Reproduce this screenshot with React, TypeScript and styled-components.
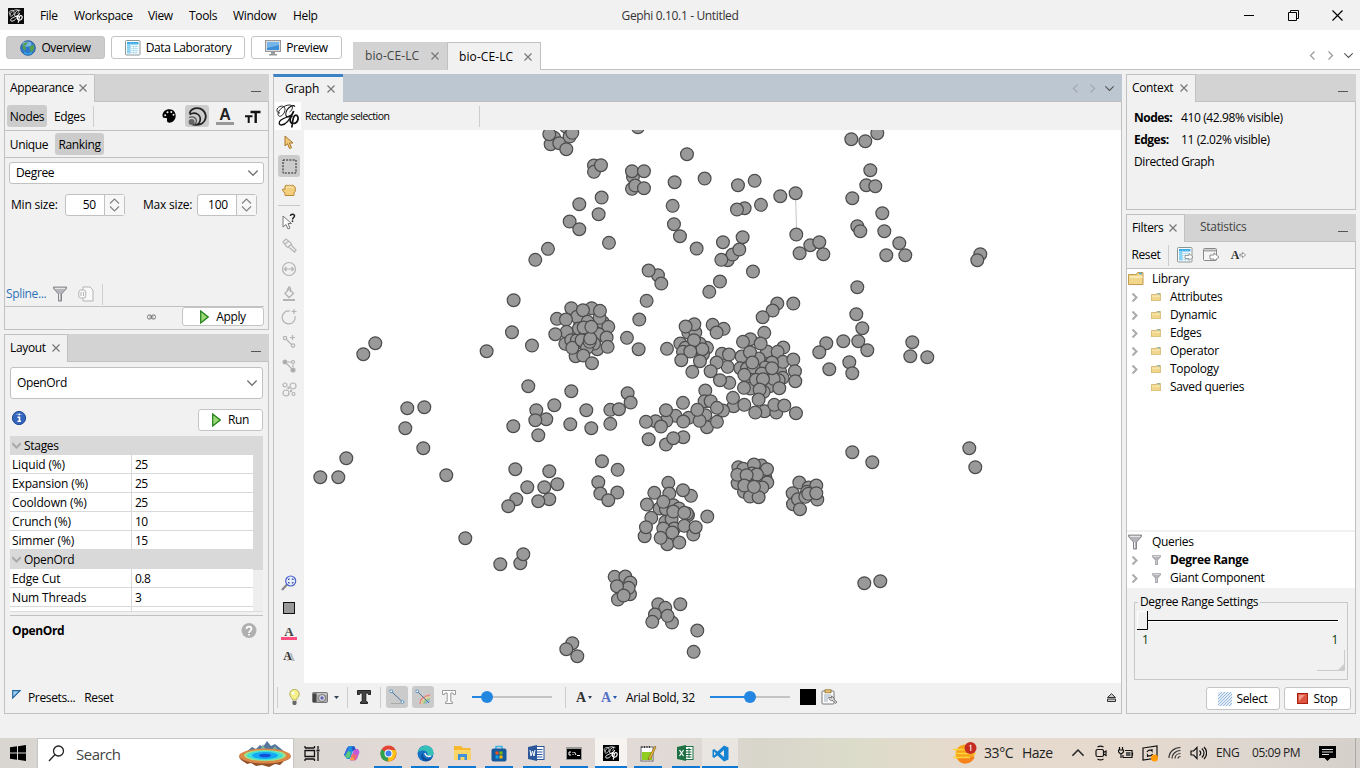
import React from "react";
import styled, { createGlobalStyle, css } from "styled-components";

const line = "#c1c1c1";

const Global = createGlobalStyle`
  *, *::before, *::after { box-sizing: border-box; }
  body { margin: 0; background: #f1f1f1; }
  svg { display: block; flex: none; }
`;

const Screen = styled.div`
  width: 1360px;
  height: 768px;
  overflow: hidden;
  display: flex;
  flex-direction: column;
  background: #f1f1f1;
  color: #000;
  font: 12px/16px "Open Sans", "Noto Sans", sans-serif;
  letter-spacing: -0.35px;
  white-space: nowrap;
`;

/* ---------- title bar ---------- */
const TitleBar = styled.header`
  height: 30px;
  flex: none;
  display: grid;
  grid-template-columns: 620px 1fr 620px;
  align-items: center;
`;
const MenuBar = styled.nav`
  display: flex;
  align-items: center;
  padding: 1px 0 0 8px;
`;
const MenuItem = styled.span<{ $w: number }>`
  width: ${(p) => p.$w}px;
`;
const Title = styled.div`
  text-align: center;
  color: #333;
  padding-top: 1px;
  letter-spacing: -0.35px;
`;
const WindowButtons = styled.div`
  display: flex;
  justify-content: flex-end;
  gap: 33px;
  padding-right: 17px;
`;

/* ---------- perspective bar ---------- */
const PerspectiveBar = styled.div`
  height: 40px;
  flex: none;
  display: flex;
  background: #fff;
  border-bottom: 1px solid ${line};
  padding: 6px 7px 0 6px;
`;
const Button = styled.button<{ $w: number; $h?: number; $on?: boolean; $gap?: number }>`
  width: ${(p) => p.$w}px;
  height: ${(p) => p.$h ?? 23}px;
  flex: none;
  display: flex;
  align-items: center;
  justify-content: center;
  gap: ${(p) => p.$gap ?? 5}px;
  padding: 0;
  border: 1px solid #c4c4c4;
  border-radius: 3px;
  background: ${(p) => (p.$on ? "#cccccc" : "#fff")};
  color: #000;
  font: inherit;
  letter-spacing: inherit;
`;
const ButtonRow = styled.div`
  display: flex;
  gap: 6px;
  width: 347px;
`;
const WorkspaceTab = styled.div<{ $active?: boolean }>`
  display: flex;
  align-items: center;
  justify-content: space-between;
  margin-top: 6px;
  height: 28px;
  width: ${(p) => (p.$active ? 94 : 94)}px;
  padding: 0 ${(p) => (p.$active ? "8px 0 11px" : "8px 0 12px")};
  color: ${(p) => (p.$active ? "#000" : "#444")};
  background: ${(p) => (p.$active ? "#f1f1f1" : "#d3d3d3")};
  border: ${(p) => (p.$active ? `1px solid ${line}` : "0")};
  border-bottom: 0;
  letter-spacing: 0.1px;
`;
const TabArrows = styled.div`
  display: flex;
  align-items: center;
  gap: 9px;
  margin-left: auto;
  padding: 6px 0 0;
`;

/* ---------- docked panels ---------- */
const Workbench = styled.main`
  height: 640px;
  margin: 4px 4px 24px;
  flex: none;
  display: grid;
  grid-template-columns: 265px 849px 230px;
  column-gap: 4px;
`;
const Column = styled.div`
  display: flex;
  flex-direction: column;
  gap: 4px;
`;
const Panel = styled.section<{ $h: number }>`
  height: ${(p) => p.$h}px;
  display: flex;
  flex-direction: column;
  border: 1px solid ${line};
  border-top: 0;
`;
const PanelHead = styled.div<{ $focus?: boolean }>`
  height: 28px;
  flex: none;
  display: flex;
  align-items: stretch;
  margin: 0 -1px;
  background: ${(p) => (p.$focus ? "#bdc7d1" : "#d3d3d3")};
  box-shadow: inset 0 -1px ${line};
`;
const PanelTab = styled.div<{ $w: number; $focus?: boolean }>`
  width: ${(p) => p.$w}px;
  display: flex;
  align-items: center;
  justify-content: space-between;
  padding: 0 7px 1px 5px;
  background: #f1f1f1;
  border: 1px solid ${line};
  border-bottom: 0;
  ${(p) =>
    p.$focus &&
    css`
      border-top: 3px solid #3c83c5;
      border-right: 0;
      padding: 0 8px 2px 11px;
      letter-spacing: -0.15px;
    `}
`;
const IdleTab = styled.span`
  padding: 5px 0 0 15px;
  color: #444;
  letter-spacing: -0.3px;
`;
const Minimise = styled.span`
  width: 10px;
  height: 1px;
  background: #555;
  margin: 17px 8px 0 auto;
`;
const Bar = styled.div<{ $h: number; $rule?: boolean }>`
  height: ${(p) => p.$h}px;
  flex: none;
  display: flex;
  align-items: center;
  padding-left: 2px;
  border-bottom: ${(p) => (p.$rule ? `1px solid ${line}` : "0")};
`;
const Toggle = styled.span<{ $on?: boolean; $w: number; $drop?: number }>`
  width: ${(p) => p.$w}px;
  height: 22px;
  flex: none;
  display: flex;
  align-items: center;
  justify-content: center;
  border-radius: 3px;
  padding-top: ${(p) => p.$drop ?? 0}px;
  background: ${(p) => (p.$on ? "#cccccc" : "transparent")};
`;
const Separator = styled.i<{ $h?: number; $m?: string }>`
  width: 1px;
  height: ${(p) => p.$h ?? 21}px;
  flex: none;
  background: #cdcdcd;
  margin: ${(p) => p.$m ?? "0"};
`;
const IconGroup = styled.div`
  display: flex;
  margin-left: auto;
  gap: 4px;
  margin-right: 3px;
`;
const Combo = styled.div<{ $h: number; $m: string }>`
  height: ${(p) => p.$h}px;
  flex: none;
  margin: ${(p) => p.$m};
  padding: 0 5px 0 6px;
  display: flex;
  align-items: center;
  justify-content: space-between;
  background: #fff;
  border: 1px solid ${line};
  border-radius: 3px;
`;
const SizeRow = styled.div`
  display: flex;
  align-items: center;
  padding: 10px 0 0 6px;
  letter-spacing: -0.2px;
`;
const SizeLabel = styled.label<{ $w: number }>`
  width: ${(p) => p.$w}px;
  flex: none;
`;
const Spinner = styled.div`
  width: 60px;
  height: 22px;
  flex: none;
  display: flex;
  background: #fff;
  border: 1px solid ${line};
  border-radius: 3px;
  margin-right: 18px;
`;
const SpinnerValue = styled.span`
  width: 39px;
  padding: 2px 8px 0 0;
  text-align: right;
  border-right: 1px solid ${line};
`;
const SpinnerArrows = styled.span`
  flex: 1;
  display: grid;
  place-items: center;
  align-content: center;
  background: #f7f7f7;
`;
const SplineRow = styled.div`
  display: flex;
  align-items: center;
  height: 24px;
  margin-top: auto;
  padding-left: 1px;
`;
const SplineLink = styled.a`
  width: 47px;
  color: #2f72b8;
`;
const ApplyRow = styled.div`
  height: 23px;
  display: flex;
  align-items: flex-start;
  justify-content: flex-end;
  margin-right: 4px;
  border-top: 1px solid ${line};
`;
const LinkIcon = styled.span`
  padding: 7px 26px 0 0;
`;
const RunRow = styled.div`
  height: 22px;
  margin: 10px 5px 5px 7px;
  display: flex;
  justify-content: space-between;
`;

/* ---------- layout property sheet ---------- */
const Sheet = styled.div`
  height: 176px;
  margin: 0 5px;
  display: flex;
  overflow: hidden;
  border-bottom: 1px solid #dcdcdc;
`;
const Rows = styled.div`
  width: 243px;
`;
const GroupRow = styled.div`
  height: 19px;
  display: flex;
  align-items: center;
  gap: 3px;
  padding-left: 2px;
  background: #d9d9d9;
  letter-spacing: -0.3px;
`;
const PropRow = styled.div`
  height: 19px;
  display: grid;
  grid-template-columns: 122px 1fr;
  background: #fff;
  border-bottom: 1px solid #d9d9d9;
`;
const PropCell = styled.span`
  padding: 2px 0 0 3px;
  border-right: 1px solid #d9d9d9;
  letter-spacing: -0.15px;
  &:first-child { padding-left: 2px; }
  &:last-child { border: 0; letter-spacing: -0.5px; }
`;
const ScrollTrack = styled.div`
  width: 10px;
  background: #eee;
  &::before { content: ""; display: block; height: 134px; background: #d9d9d9; }
`;
const HelpBox = styled.div`
  flex: 1;
  margin: 3px 5px 0;
  border-top: 1px solid ${line};
  padding: 7px 6px 0 2px;
  display: flex;
  justify-content: space-between;
  font-weight: 700;
`;
const PresetRow = styled.div`
  display: flex;
  height: 23px;
  align-items: flex-start;
  padding-left: 7px;
`;
const PresetText = styled.span<{ $m: number }>`
  margin-left: ${(p) => p.$m}px;
`;

/* ---------- graph ---------- */
const HeadArrows = styled.div`
  display: flex;
  align-items: center;
  gap: 8px;
  margin: 0 8px 0 auto;
`;
const GraphBar = styled.div`
  height: 28px;
  flex: none;
  display: flex;
  align-items: center;
  padding-left: 1px;
`;
const LogoBox = styled.span`
  width: 26px;
  height: 28px;
  background: #fff;
  margin-right: 4px;
`;
const ToolName = styled.span`
  width: 174px;
  font-size: 10.5px;
  letter-spacing: -0.5px;
`;
const GraphBody = styled.div`
  height: 553px;
  flex: none;
  display: flex;
`;
const ToolStrip = styled.div`
  width: 30px;
  display: flex;
  flex-direction: column;
  align-items: center;
`;
const Tool = styled.span<{ $on?: boolean; $top?: number }>`
  width: 22px;
  height: 22px;
  margin-top: ${(p) => p.$top ?? 2}px;
  display: grid;
  place-items: center;
  border-radius: 3px;
  background: ${(p) => (p.$on ? "#cbcbcb" : "transparent")};
`;
const StripRule = styled.i`
  width: 22px;
  height: 1px;
  background: #c8c8c8;
  margin-top: 4px;
`;
const Canvas = styled.svg`
  background: #fff;
`;
const GraphFooter = styled.div`
  flex: 1;
  display: flex;
  align-items: center;
  padding-bottom: 2px;
`;
const Slot = styled.span<{ $w: number; $on?: boolean; $m?: number }>`
  width: ${(p) => p.$w}px;
  height: 22px;
  flex: none;
  margin-right: ${(p) => p.$m ?? 0}px;
  display: flex;
  align-items: center;
  justify-content: center;
  border-radius: 3px;
  background: ${(p) => (p.$on ? "#cbcbcb" : "transparent")};
`;
const Slider = styled.span<{ $fill: number }>`
  width: 80px;
  height: 12px;
  flex: none;
  display: flex;
  align-items: center;
  background: linear-gradient(90deg, #2387e2 ${(p) => p.$fill}px, #c4c4c4 ${(p) => p.$fill}px) center / 100% 2px no-repeat;
  &::before {
    content: "";
    width: 12px;
    height: 12px;
    border-radius: 50%;
    background: #2387e2;
    margin-left: ${(p) => p.$fill - 6}px;
  }
`;
const FontName = styled.span`
  width: 84px;
  padding-top: 1px;
`;
const Swatch = styled.i`
  width: 16px;
  height: 16px;
  background: #000;
  margin-right: 5px;
`;

/* ---------- context and filters ---------- */
const ContextBody = styled.dl`
  margin: 5px 0 0 7px;
  line-height: 22px;
  display: grid;
  grid-template-columns: 47px 1fr;
  letter-spacing: -0.38px;
`;
const Term = styled.dt`
  font-weight: 700;
  letter-spacing: -0.5px;
`;
const Value = styled.dd<{ $wide?: boolean }>`
  margin: 0;
  ${(p) => p.$wide && "grid-column: 1 / 3;"}
`;
const Tree = styled.div<{ $h: number; $gap?: number }>`
  height: ${(p) => p.$h}px;
  flex: none;
  background: #fff;
  margin-bottom: ${(p) => p.$gap ?? 0}px;
  padding-top: 1px;
  letter-spacing: -0.32px;
`;
const TreeRow = styled.div<{ $bold?: boolean }>`
  height: 18px;
  display: grid;
  grid-template-columns: 15px 28px 1fr;
  align-items: center;
  font-weight: ${(p) => (p.$bold ? 700 : 400)};
`;
const TreeRoot = styled.div`
  height: 18px;
  padding-left: 1px;
  display: grid;
  grid-template-columns: 24px 1fr;
  align-items: center;
`;
const Center = styled.span`
  display: grid;
  place-items: center;
`;
const Settings = styled.fieldset`
  height: 85px;
  margin: 7px 7px 7px 7px;
  padding: 0 2px;
  border: 1px solid #c8c8c8;
  min-width: 0;
`;
const Legend = styled.legend`
  padding: 0 2px;
  margin-left: 1px;
  line-height: 14px;
  letter-spacing: -0.36px;
`;
const RangeLabels = styled.div`
  display: flex;
  justify-content: space-between;
  padding: 1px 7px 0 5px;
  color: #0b3d0b;
`;
const FilterActions = styled.div`
  display: flex;
  justify-content: flex-end;
  gap: 4px;
  padding-right: 4px;
`;

/* ---------- taskbar ---------- */
const Taskbar = styled.footer`
  height: 30px;
  flex: none;
  display: flex;
  align-items: stretch;
  background: linear-gradient(90deg, #d9d5d0 0, #dcd8d4 300px, #e5dad7 480px, #e0dad5 680px, #d8d5cb 760px, #dcdccb 850px, #e6dacd 960px, #e6dacf 1130px, #ddd6cf 1260px, #d5d0ca 1360px);
  color: #222;
`;
const Start = styled.div`
  width: 37px;
  flex: none;
  padding-right: 2px;
  display: grid;
  place-items: center;
`;
const Search = styled.div`
  width: 257px;
  flex: none;
  display: flex;
  align-items: center;
  background: #fff;
  border: 1px solid #c6c6c6;
  border-bottom-width: 0;
  padding: 0 1px 0 10px;
  font-size: 15px;
  letter-spacing: -0.5px;
  color: #444;
`;
const SearchText = styled.span`
  flex: 1;
  padding-left: 11px;
`;
const TaskItem = styled.div<{ $w: number; $line?: number; $bg?: string }>`
  width: ${(p) => p.$w}px;
  flex: none;
  display: flex;
  align-items: center;
  justify-content: center;
  background-color: ${(p) => p.$bg ?? "transparent"};
  background-image: ${(p) => (p.$line ? "linear-gradient(#0f78d4, #0f78d4)" : "none")};
  background-size: ${(p) => p.$line ?? 0}px 2px;
  background-position: center bottom;
  background-repeat: no-repeat;
`;
const Tray = styled.div`
  display: flex;
  align-items: center;
  margin-left: auto;
  border-right: 1px solid #aaa;
  margin-right: 4px;
`;
const TrayText = styled.span<{ $w: number; $size?: number; $ls?: number }>`
  width: ${(p) => p.$w}px;
  font-size: ${(p) => p.$size ?? 12}px;
  letter-spacing: ${(p) => p.$ls ?? -0.3}px;
`;

/* ---------- icons ---------- */
const Close = () => (
  <svg width="8" height="8" viewBox="0 0 8 8" stroke="#777" strokeWidth="1.2">
    <path d="M0.5 0.5 7.5 7.5M7.5 0.5 0.5 7.5" />
  </svg>
);
const Chevron = ({ dir, color = "#777", size = 9, w = 1.2 }: { dir: "l" | "r" | "d" | "u"; color?: string; size?: number; w?: number }) => {
  const d = { l: "M6.5 0.5 2.5 4.5 6.5 8.5", r: "M2.5 0.5 6.5 4.5 2.5 8.5", d: "M0.3 2.3 4.5 6.5 8.7 2.3", u: "M0.3 6.5 4.5 2.3 8.7 6.5" }[dir];
  return (
    <svg width={size} height={size} viewBox="0 0 9 9" fill="none" stroke={color} strokeWidth={w}>
      <path d={d} />
    </svg>
  );
};
const SpinArrows = () => (
  <svg width="11" height="14" viewBox="0 0 11 14" fill="none" stroke="#808080" strokeWidth="1.100">
    <path d="M1 5.500 5.500 1 10 5.500M1 8.500 5.500 13 10 8.500" />
  </svg>
);
const GephiMark = ({ size = 16, fg = "#fff", bg, h }: { size?: number; fg?: string; bg?: string; h?: number }) => (
  <svg width={size} height={h ?? size} viewBox="0 0 26 28" preserveAspectRatio="none" fill="none" stroke={fg} strokeWidth={bg ? 1.2 : 0.9}>
    {bg && <rect width="26" height="28" fill={bg} stroke="none" />}
    <path d="M5 11C1 11 .8 6 5 4.500 9 3 11 6 9.500 10 8 14 3.500 16 3 12.500 2.500 8 10 2.500 15 3c3.500.5 3 5-.5 7" />
    <path d="M20 4.500c-2-2-6 0-8 3.500-2 3.500-1.500 7 1 7 2.500-.2 5-3 6-6" strokeWidth={bg ? 1.5 : 1.1} />
    <path d="M18.500 9c-2.500 6-7 14-12 14-3 0-3-3-.5-5 3-2.500 8-3 11-5.500" strokeWidth={bg ? 1.5 : 1.3} />
    <path d="M17.500 13.500c-3 1.500-3.500 7.500.5 8 4.500.3 6.500-5.500 4-8-2.500-1.500-3.700 2-4.200 5l-1 7" strokeWidth={bg ? 2 : 1.7} />
  </svg>
);
const Globe = () => (
  <svg width="16" height="16" viewBox="0 0 16 16">
    <circle cx="8" cy="8" r="7.3" fill="#2f78cc" stroke="#2b5f9e" />
    <ellipse cx="7" cy="4" rx="4.5" ry="2.6" fill="#8cc6f0" opacity=".8" />
    <path d="M3 4.500c1-1.500 3-2.500 5-2.500L7 4.500 4.500 6l1.500 2-1 2.500C3 10 2 7 3 4.500zM9.500 6.500l4-2 1 3.500-2 3.500-2 .5-.5-3z" fill="#55a050" />
    <path d="M4 12.500c2 2 6 2 8 0" stroke="#2fb0e8" strokeWidth="1.200" fill="none" />
  </svg>
);
const TableIcon = ({ arrow }: { arrow?: boolean }) => (
  <svg width="16" height="16" viewBox="0 0 16 16">
    <rect x=".5" y=".5" width="14.5" height="14.5" rx="1" fill="#fff" stroke="#8a9694" />
    <rect x="2" y="2" width="11.5" height="2.5" fill="#3aabe6" />
    <rect x="2" y="4.5" width="3" height="9" fill="#7fd0f5" />
    <path d="M2 6.5h11.5M2 8.5h11.5M2 10.5h11.5M2 12.5h11.5M5.5 3v11M8.5 3v11M11 3v11" stroke="#a5d8ef" strokeWidth=".7" />
    {arrow && <path d="M8 8.5h4v-2l4 3.5-4 3.5v-2H8z" fill="#fff" stroke="#888" strokeWidth=".8" />}
  </svg>
);
const Monitor = () => (
  <svg width="16" height="16" viewBox="0 0 16 16">
    <rect x=".5" y=".5" width="15" height="11" fill="#ddd" stroke="#999" />
    <rect x="2" y="2" width="12" height="8" fill="#3e8fd8" />
    <path d="M2 2h12v3L2 8z" fill="#75b5ea" />
    <path d="M6 12h4v2h2v1.5H4V14h2z" fill="#999" />
  </svg>
);
const Palette = () => (
  <svg width="14" height="14" viewBox="0 0 14 14">
    <path d="M7.5.3C3.5.3.5 3 .5 6.500.5 9 2.500 9 4 9c1.500 0 1 1 1 2.500S6 13.700 7.500 13.700C11 13.700 13.700 10.500 13.700 6.800S11 .3 7.500.3z" fill="#000" />
    <g fill="#f1f1f1">
      <circle cx="3.200" cy="6.200" r="1" /><circle cx="5.500" cy="3.200" r="1" /><circle cx="9.300" cy="3" r="1" /><circle cx="11.500" cy="5.700" r="1" />
    </g>
  </svg>
);
const SizeIcon = () => (
  <svg width="19" height="19" viewBox="0 0 19 19" fill="none" stroke="#222">
    <path d="M1.500 6.500C2.500 3 6 1.200 9.500 1.200a8.300 8.300 0 0 1 2.500 16.200c-2 .6-5 .5-7.500.3" strokeWidth="1.800" />
    <path d="M1.500 7.500c6-3.500 12 .5 10.500 6.500-.4 1.500-1.200 2.700-2.500 3.500" strokeWidth="1.600" />
    <path d="M1 10.500c4-1.500 7.500 0 7.500 3.500 0 1.700-1 3-2.500 3.700" strokeWidth="1.300" stroke="#555" />
    <circle cx="3.600" cy="15" r="3" fill="#666" stroke="none" />
  </svg>
);
const Letter = styled.span<{ $size?: number; $color?: string; $bar?: string; $serif?: boolean; $lh?: number }>`
  font: 700 ${(p) => p.$size ?? 16}px/${(p) => p.$lh ?? 15}px ${(p) => (p.$serif ? '"Liberation Serif", serif' : '"Liberation Sans", sans-serif')};
  color: ${(p) => p.$color ?? "#222"};
  border-bottom: ${(p) => (p.$bar ? `3px solid ${p.$bar}` : "0")};
  padding: 0 ${(p) => (p.$bar ? 3 : 0)}px;
  letter-spacing: 0;
  text-shadow: none;
`;
const ShadowLetter = styled(Letter)`
  text-shadow: 3px 1px 0 #b9b9b9;
  padding-right: 3px;
`;
const TextSizeIcon = () => (
  <svg width="16" height="14" viewBox="0 0 16 14" stroke="#111" fill="none">
    <path d="M0 6.200h7.500M3.700 6v7" strokeWidth="2" /><path d="M5.500 2h10M10.700 2v11" strokeWidth="2.400" />
  </svg>
);
const Funnel = ({ s = 14 }: { s?: number }) => (
  <svg width={s} height={s * 1.15} viewBox="0 0 14 16">
    <path d="M.5 1h13v1.500L8.500 8v7h-3V8L.5 2.500z" fill="#b5b5bb" stroke="#7c7c80" strokeWidth=".9" />
    <path d="M2 2.300h10M6.500 8v6" stroke="#eee" />
  </svg>
);
const Play = () => (
  <svg width="9" height="14" viewBox="0 0 9 14">
    <path d="M.7 1v12l7.500-6z" fill="#9ad875" stroke="#1f7f16" strokeWidth="1.200" />
  </svg>
);
const Folder = ({ s = 10 }: { s?: number }) => (
  <svg width={s} height={s * 0.85} viewBox="0 0 16 13.500">
    <path d="M.5 2.500h8l1-2h5.500v12H.5z" fill="#f1d68b" stroke="#c29b4a" />
    <path d="M1.500 4h13v2h-13z" fill="#faeab5" /><path d="M11 1.500h3" stroke="#3aabe6" strokeWidth="1.500" />
  </svg>
);
const Bucket = () => (
  <svg width="14" height="15" viewBox="0 0 14 15" fill="none" stroke="#b3b3b3" strokeWidth="1.300">
    <path d="M3 7.500 7 3l4.500 4.500L7 11.500zM5 4.500 7 .8 8.500 2v4" /><path d="M1 14h12" strokeWidth="2" />
  </svg>
);
const Brush = () => (
  <svg width="15" height="15" viewBox="0 0 15 15" fill="none" stroke="#b3b3b3" strokeWidth="1.200">
    <path d="M1 4 4 1l5 4 1 3 4 4-1.500 2L8 10 5 9zM3 6l4-3M6 9l4-3" />
  </svg>
);
const Arrow = ({ fill, stroke }: { fill: string; stroke: string }) => (
  <svg width="10" height="15" viewBox="0 0 10 15">
    <path d="M1 1v10l2.500-2.300L5.500 13.500l2-.8L5.500 8H9z" fill={fill} stroke={stroke} />
  </svg>
);
const Hand = () => (
  <svg width="14" height="12" viewBox="0 0 14 12">
    <path d="M3 11.500V9L.7 7V5l2.300.3V2L4.500 1 6 2 7.500 1 9 2l1.500-1L12 2l1.300 1.500v3.500L12 9v2.500z" fill="#f3cf7d" stroke="#b98a3c" />
    <path d="M4 4c2-1.500 5-1.500 7 0" stroke="#fff0c0" fill="none" />
  </svg>
);
const Circled = ({ plus }: { plus?: boolean }) => (
  <svg width="16" height="16" viewBox="0 0 16 16" fill="none" stroke="#b3b3b3" strokeWidth="1.200">
    {plus ? <path d="M9 2a6.500 6.500 0 1 0 5 5M13 0v5M10.500 2.500h5" /> : <><circle cx="8" cy="8" r="6.500" /><path d="M3.500 8h9M5.500 6l-2 2 2 2M10.500 6l2 2-2 2" /></>}
  </svg>
);
const PathIcon = ({ kind }: { kind: number }) => (
  <svg width="15" height="15" viewBox="0 0 15 15" fill="none" stroke="#b3b3b3" strokeWidth="1.200">
    {kind === 0 && <><circle cx="3" cy="4" r="1.700" /><circle cx="11" cy="11.500" r="1.700" /><path d="m4.500 5.500 5 5M10.500 1v5M8 3.500h5" /></>}
    {kind === 1 && <><circle cx="3" cy="4" r="2" fill="#a8a8a8" /><circle cx="11" cy="12" r="2" fill="#a8a8a8" /><circle cx="11" cy="4" r="1.500" /><path d="m4.500 5.500 5 5M11 6.500V9M6 4h3" /></>}
    {kind === 2 && <><circle cx="3" cy="3" r="2" /><circle cx="11" cy="4" r="3" /><circle cx="4" cy="11" r="3" /><circle cx="11.500" cy="12" r="1.500" /><circle cx="6.500" cy="6" r=".6" /><circle cx="9" cy="9" r=".6" /></>}
  </svg>
);
const Magnifier = () => (
  <svg width="16" height="16" viewBox="0 0 16 16" fill="none">
    <path d="m1 15 5-5.500" stroke="#888" strokeWidth="2.200" />
    <circle cx="9.700" cy="6" r="5" fill="#e6edff" stroke="#4a63c8" strokeWidth="1.200" />
    <path d="M7.500 5V4h1.200M10.800 4H12v1M12 7v1h-1.200M8.700 8H7.500V7" stroke="#2b3d8c" />
  </svg>
);
const Bulb = () => (
  <svg width="11" height="17" viewBox="0 0 11 17">
    <path d="M3.500 11C3.500 9 .8 8 .8 5A4.700 4.700 0 0 1 10.200 5c0 3-2.700 4-2.700 6z" fill="#f5f08a" stroke="#b3ad5b" />
    <circle cx="4" cy="4" r="1.500" fill="#fff" /><path d="M3.500 12h4v3l-1 1h-2l-1-1z" fill="#666" />
  </svg>
);
const Camera = () => (
  <svg width="16" height="13" viewBox="0 0 16 13">
    <rect x=".5" y="1.500" width="15" height="10" rx="1" fill="#aaa" stroke="#777" /><rect x="1" y="2.500" width="3.500" height="8.500" fill="#444" />
    <path d="M5 3h10" stroke="#ddd" /><circle cx="10" cy="7" r="3.500" fill="#ddd" stroke="#777" /><circle cx="10" cy="7" r="1.700" fill="#66b" />
  </svg>
);
const EdgeIcon = ({ rainbow }: { rainbow?: boolean }) => (
  <svg width="16" height="16" viewBox="0 0 16 16" fill="none">
    {rainbow && <><path d="M5 15c0-5 4-8 10-9" stroke="#ea8a82" strokeWidth="1.500" /><path d="M7 15c0-4 3-6 8-7" stroke="#e8cf88" strokeWidth="1.500" /><path d="M9 15c0-3 2-4.500 6-5" stroke="#90c888" strokeWidth="1.500" /><path d="M11 15c0-2 1-3 4-3" stroke="#8ab1e0" strokeWidth="1.500" /></>}
    <path d={rainbow ? "m3 3 11 11" : "m3 3 10 9.500"} stroke="#47749c" />
    <circle cx="2.200" cy="2.200" r="1.400" fill="#fff" stroke="#5c93c2" />
    {!rainbow && <><circle cx="13.500" cy="13" r="1.400" fill="#fff" stroke="#5c93c2" /><path d="M2 14.500h10" stroke="#aaa" /></>}
  </svg>
);
const BigT = ({ fill, stroke }: { fill: string; stroke: string }) => (
  <svg width="16" height="16" viewBox="0 0 16 16">
    <path d="M1.500 1.500h13V5.500h-2L12 4H9.800v8.500l1.700.5v1.500h-7V13l1.700-.5V4H4l-.5 1.500h-2z" fill={fill} stroke={stroke} />
  </svg>
);
const Clipboard = () => (
  <svg width="16" height="16" viewBox="0 0 16 16">
    <rect x="1" y="2" width="12" height="13" rx="1" fill="#fff" stroke="#777" /><rect x="4" y=".8" width="6" height="3" fill="#e7c16d" stroke="#8c7436" strokeWidth=".8" />
    <path d="M3 6h7M3 8h5M3 10h4M3 12h4" stroke="#9ab" /><path d="M8 8a3 3 0 0 0 4 3.500l2.500 3L16 13l-3-2.500A3 3 0 0 0 10 7l1 2z" fill="#ddd" stroke="#666" strokeWidth=".8" />
  </svg>
);

/* ---------- graph data: clusters keep an origin and offsets in thirds of a pixel ---------- */
type Cluster = { x: number; y: number; unit: number; at: string };
const clusters: Cluster[] = [
  { x: 480, y: 125, unit: 3, at: "300,600 325,598 300,625 342,610 318,640 368,592 270,630 310,655 345,640 258,5 222,38 211,57 237,54 207,27 268,34 276,23 258,72 473,6 341,121 341,140 362,120 620,87 583,171 673,160 773,180 823,167 900,213 946,204 458,155 455,138 491,138 455,191 465,181 491,189 364,217 297,237 355,267 268,289 297,312 386,353 203,371 165,404 577,242 581,297 599,333 649,370 793,249 770,253 842,239 728,351 787,336 742,405 757,388 777,373 723,404 818,439 719,469 687,500 948,328 990,360 958,384 533,450 505,436 543,475 499,527 477,583 440,638 475,672 100,525 95,621 155,661 19,678 273,549 334,549 358,578 290,575 384,605 230,581 257,583 259,620 225,627 255,656 273,645 290,645 355,627 379,637 351,672 341,655 286,693 276,668 296,610 308,555 359,557 322,590 316,625 304,645 320,668 328,650 330,640 310,607 333,605 382,665 309,691 335,714" },
  { x: 600, y: 280, unit: 3, at: "510,230 520,280 470,275 500,310 540,275 450,290 470,250 531,70 517,91 487,111 579,70 200,206 264,157 285,157 282,132 256,139 240,190 255,203 320,203 248,215 298,190 308,222 306,207 299,243 281,180 270,214 243,240 276,275 337,134 370,146 349,157 365,221 382,260 386,223 349,247 331,273 387,308 359,300 492,158 450,177 428,185 500,214 549,202 424,229 475,235 420,264 481,190 449,216 532,215 548,245 579,238 515,247 440,265 495,262 460,262 456,247 484,280 584,273 585,303 547,293 535,300 432,284 450,325 508,318 490,335 467,299 520,296 488,297 515,264 478,328 431,323 537,324 475,358 400,378 432,374 398,353 493,393 465,397 528,397 522,374 552,376 587,399 315,331 313,363 331,363 315,405 368,391 320,441 350,383 350,425 265,413 298,422 291,389 248,368 226,407 249,424 198,422 197,390 166,423 137,425 182,439 145,477 197,493 249,471 219,474 82,339 91,367 30,389 56,387 30,431" },
  { x: 600, y: 440, unit: 3, at: "440,130 425,115 495,112 470,125 5,63 52,89 -6,126 0,160 51,157 24,180 204,128 162,158 207,160 272,167 248,150 178,205 140,193 197,207 219,195 236,205 189,185 153,233 263,225 260,220 195,245 214,237 219,214 252,218 321,229 133,288 137,261 222,265 252,257 279,283 286,261 189,265 201,312 216,277 237,307 181,293 414,81 483,76 429,86 461,73 412,129 500,87 455,100 470,103 411,104 439,105 501,127 431,155 449,169 486,142 432,136 475,171 461,140 597,127 577,159 625,142 578,192 648,136 651,178 620,155 593,177 615,170 624,161 648,159 599,207 43,410 75,409 90,427 89,462 85,443 53,478 50,438 70,466 174,492 195,503 164,523 215,547 202,527 156,545 240,492 291,571 280,635" },
  { x: 0, y: 0, unit: 1, at: "375,343 363,354 407,408 424,407 405,428 423,448 446,475 346,458 338,477 320,477 465,538 500,564 520,563 523,554 528,386 571,391 554,405 536,410 546,419 535,420 513,426 538,435 570,424 586,410 591,428 515,469 549,471 557,484 527,487 544,487 516,499 549,499 538,501 508,506 572,643 566,649 577,656 851,139 865,141 877,133 870,170 852,198 866,185 875,186 882,213 857,226 860,231 884,231 899,243 886,255 905,255 819,242 823,254 980,254 977,260 857,287 856,314 862,328 858,341 843,341 826,343 819,352 867,350 829,369 849,362 852,373 912,342 910,356 927,357 852,452 872,462 969,448 975,467 864,583 880,581" },
];
const nodes = clusters.flatMap((c) =>
  c.at.split(" ").map((p) => {
    const [x, y] = p.split(",").map(Number);
    return { x: c.x + x / c.unit + 0.3, y: c.y + y / c.unit + 0.2 };
  })
);

const Graph = () => (
  <Canvas width="817" height="553" viewBox="304 130 817 553">
    <path d="M795.700 199 796.500 228" stroke="#c4c4c4" />
    <g fill="#999" stroke="#4c4c4c" strokeWidth="1.200">
      {nodes.map((n, i) => <circle key={i} cx={n.x} cy={n.y} r="6.400" />)}
    </g>
  </Canvas>
);

/* ---------- panels ---------- */
const Appearance = () => (
  <Panel $h={256}>
    <PanelHead>
      <PanelTab $w={91}>Appearance<Close /></PanelTab>
      <Minimise />
    </PanelHead>
    <Bar $h={29} $rule>
      <Toggle $on $w={40} $drop={2}>Nodes</Toggle>
      <Toggle $w={45} $drop={2}>Edges</Toggle>
      <Separator $m="0 0 0 1px" />
      <IconGroup>
        <Toggle $w={24}><Palette /></Toggle>
        <Toggle $w={24} $on><SizeIcon /></Toggle>
        <Toggle $w={24}><Letter $bar="#999">A</Letter></Toggle>
        <Toggle $w={24} $drop={2}><TextSizeIcon /></Toggle>
      </IconGroup>
    </Bar>
    <Bar $h={27} $rule>
      <Toggle $w={44} $drop={2}>Unique</Toggle>
      <Separator $h={0} $m="0 3px 0 0" />
      <Toggle $w={49} $on $drop={2}>Ranking</Toggle>
    </Bar>
    <Combo $h={22} $m="4px 4px 0">Degree<Chevron dir="d" size={10} /></Combo>
    <SizeRow>
      <SizeLabel $w={54}>Min size:</SizeLabel>
      <Spinner>
        <SpinnerValue>50</SpinnerValue>
        <SpinnerArrows><SpinArrows /></SpinnerArrows>
      </Spinner>
      <SizeLabel $w={54}>Max size:</SizeLabel>
      <Spinner>
        <SpinnerValue>100</SpinnerValue>
        <SpinnerArrows><SpinArrows /></SpinnerArrows>
      </Spinner>
    </SizeRow>
    <SplineRow>
      <SplineLink>Spline...</SplineLink>
      <Funnel />
      <Separator $h={0} $m="0 10px 0 0" />
      <svg width="16" height="16" viewBox="0 0 16 16" fill="#f8f8f8" stroke="#b5b5b5">
        <path d="M5 1h7l3 3v11H5z" /><rect x=".8" y="4" width="7" height="8" rx="2" /><path d="M3 6v4M5.500 6v4" />
      </svg>
      <Separator $m="0 0 0 8px" />
    </SplineRow>
    <ApplyRow>
      <LinkIcon>
        <svg width="9" height="6" viewBox="0 0 9 6" fill="none" stroke="#777"><rect x=".5" y="1" width="4" height="4" rx="1.500" /><rect x="4.500" y="1" width="4" height="4" rx="1.500" /><path d="M2.500 3h4" /></svg>
      </LinkIcon>
      <Button $w={82} $h={19} $gap={7}><Play />Apply</Button>
    </ApplyRow>
  </Panel>
);

type Prop = [string, string?];
const props: Prop[] = [["Stages"], ["Liquid (%)", "25"], ["Expansion (%)", "25"], ["Cooldown (%)", "25"], ["Crunch (%)", "10"], ["Simmer (%)", "15"], ["OpenOrd"], ["Edge Cut", "0.8"], ["Num Threads", "3"], ["", ""]];

const LayoutPanel = () => (
  <Panel $h={380}>
    <PanelHead>
      <PanelTab $w={64}>Layout<Close /></PanelTab>
      <Minimise />
    </PanelHead>
    <Combo $h={32} $m="5px 5px 0">OpenOrd<Chevron dir="d" size={10} /></Combo>
    <RunRow>
      <svg width="14" height="18" viewBox="0 0 14 18">
        <circle cx="7" cy="9" r="6.600" fill="#3566bd" stroke="#234a94" /><path d="M3 6a5 4 0 0 1 8 0z" fill="#7a9ede" />
        <path d="M5.500 8.300H7.500V12M5.500 12.300h3.500M6.500 5.500h1.500" stroke="#fff" strokeWidth="1.500" fill="none" />
      </svg>
      <Button $w={65} $h={22} $gap={7}><Play />Run</Button>
    </RunRow>
    <Sheet>
      <Rows>
        {props.map(([name, value], i) =>
          value === undefined ? (
            <GroupRow key={i}><Chevron dir="d" color="#aaa" w={2} />{name}</GroupRow>
          ) : (
            <PropRow key={i}><PropCell>{name}</PropCell><PropCell>{value}</PropCell></PropRow>
          )
        )}
      </Rows>
      <ScrollTrack />
    </Sheet>
    <HelpBox>
      OpenOrd
      <svg width="16" height="16" viewBox="0 0 16 16">
        <circle cx="8" cy="7.500" r="7.500" fill="#b0b0b0" /><path d="M5.500 6c0-3.300 5-3.300 5 0 0 2-2.500 1.700-2.500 4M8 11v1.500" stroke="#fff" strokeWidth="1.700" fill="none" />
      </svg>
    </HelpBox>
    <PresetRow>
      <svg width="9" height="9" viewBox="0 0 9 9"><path d="M.7 8V.7H8z" fill="#9fd0f3" stroke="#25689f" strokeWidth="1.200" /></svg>
      <PresetText $m={7}>Presets...</PresetText>
      <PresetText $m={9}>Reset</PresetText>
    </PresetRow>
  </Panel>
);

const GraphPanel = () => (
  <Panel $h={640}>
    <PanelHead $focus>
      <PanelTab $w={70} $focus>Graph<Close /></PanelTab>
      <HeadArrows><Chevron dir="l" color="#a3a9af" /><Chevron dir="r" color="#a3a9af" /><Chevron dir="d" color="#555" /></HeadArrows>
    </PanelHead>
    <GraphBar>
      <LogoBox><GephiMark size={26} h={28} fg="#111" /></LogoBox>
      <ToolName>Rectangle selection</ToolName>
      <Separator />
    </GraphBar>
    <GraphBody>
      <ToolStrip>
        <Tool $top={1}><Arrow fill="#f0c878" stroke="#a9762a" /></Tool>
        <Tool $on><svg width="15" height="15" viewBox="0 0 15 15"><rect x="1" y="1" width="13" height="13" fill="none" stroke="#222" strokeDasharray="2 1.200" /></svg></Tool>
        <Tool><Hand /></Tool>
        <StripRule />
        <Tool $top={4}>
          <svg width="16" height="17" viewBox="0 0 16 17" fill="none"><path d="M2 3v11l3-2.500 2 4.500 2-1-2-4.500h3.500z" fill="#fff" stroke="#777" /><path d="M9.500 3c0-2.500 4-2.500 4 0 0 1.500-2 1.500-2 3.500M11.500 7.500V9" stroke="#222" strokeWidth="1.500" /></svg>
        </Tool>
        <Tool><Brush /></Tool>
        <Tool><Circled /></Tool>
        <Tool><Bucket /></Tool>
        <Tool><Circled plus /></Tool>
        <Tool><PathIcon kind={0} /></Tool>
        <Tool><PathIcon kind={1} /></Tool>
        <Tool><PathIcon kind={2} /></Tool>
        <Tool $top={172}><Magnifier /></Tool>
        <Tool $top={3}><svg width="12" height="12"><rect x=".5" y=".5" width="11" height="11" fill="#999" stroke="#111" /></svg></Tool>
        <Tool $top={3}><Letter $serif $size={13} $lh={11} $bar="#ff4d7d" $color="#444">A</Letter></Tool>
        <Tool $top={1}><ShadowLetter $serif $size={12} $color="#333">A</ShadowLetter></Tool>
      </ToolStrip>
      <Graph />
    </GraphBody>
    <GraphFooter>
      <Separator $m="0 5px 0 3px" />
      <Slot $w={23}><Bulb /></Slot>
      <Slot $w={28}><Camera /></Slot>
      <Slot $w={5} $m={8}><svg width="5" height="3"><path d="M0 0h5L2.500 3z" fill="#345" /></svg></Slot>
      <Separator />
      <Slot $w={32}><BigT fill="#444" stroke="#222" /></Slot>
      <Separator />
      <Slot $w={5} />
      <Slot $w={22} $on $m={4}><EdgeIcon /></Slot>
      <Slot $w={22} $on $m={4}><EdgeIcon rainbow /></Slot>
      <Slot $w={22} $m={12}><BigT fill="#fff" stroke="#999" /></Slot>
      <Slider $fill={15} />
      <Separator $m="0 8px 0 13px" />
      <Slot $w={20} $m={5}><Letter $serif $size={14} $color="#333">A</Letter><svg width="6" height="3"><path d="M2 0h4L4 3z" fill="#345" /></svg></Slot>
      <Slot $w={20} $m={7}><Letter $serif $size={14} $color="#5570c8">A</Letter><svg width="6" height="3"><path d="M2 0h4L4 3z" fill="#25a" /></svg></Slot>
      <FontName>Arial Bold, 32</FontName>
      <Slider $fill={40} />
      <Slot $w={10} />
      <Swatch />
      <Clipboard />
      <Slot $w={268} />
      <Slot $w={12}><svg width="9" height="9" viewBox="0 0 9 9"><path d="M.5 4.500 4.500.7l4 3.800zM.5 6h8v2.500h-8z" fill="#ccc" stroke="#333" /></svg></Slot>
    </GraphFooter>
  </Panel>
);

const ContextPanel = () => (
  <Panel $h={136}>
    <PanelHead><PanelTab $w={70}>Context<Close /></PanelTab><Minimise /></PanelHead>
    <ContextBody>
      <Term>Nodes:</Term><Value>410 (42.98% visible)</Value>
      <Term>Edges:</Term><Value>11 (2.02% visible)</Value>
      <Value $wide>Directed Graph</Value>
    </ContextBody>
  </Panel>
);

const library = ["Attributes", "Dynamic", "Edges", "Operator", "Topology", "Saved queries"];

const FiltersPanel = () => (
  <Panel $h={500}>
    <PanelHead><PanelTab $w={59}>Filters<Close /></PanelTab><IdleTab>Statistics</IdleTab><Minimise /></PanelHead>
    <Bar $h={27} $rule>
      <Toggle $w={34}>Reset</Toggle>
      <Separator $m="0 8px 0 5px" />
      <TableIcon arrow />
      <Separator $h={0} $m="0 9px 0 0" />
      <svg width="17" height="14" viewBox="0 0 17 14"><rect x=".5" y=".5" width="13" height="12" rx="1" fill="#f5f5f5" stroke="#888" /><path d="M1 2.500h12" stroke="#aaa" strokeWidth="2" /><path d="M7 7h4V5l5 4-5 4v-2H7z" fill="#fff" stroke="#777" strokeWidth=".8" /></svg>
      <Slot $w={37}><Letter $serif $size={12} $color="#333">A</Letter><svg width="7" height="8" viewBox="0 0 8 8"><path d="M1 3h3V1l3.500 3L4 7V5H1z" fill="#fff" stroke="#888" /></svg></Slot>
    </Bar>
    <Tree $h={261} $gap={2}>
      <TreeRoot><Folder s={16} />Library</TreeRoot>
      {library.map((name, i) => (
        <TreeRow key={name}><Center>{i < 5 && <Chevron dir="r" color="#aaa" w={2} />}</Center><Center><Folder /></Center>{name}</TreeRow>
      ))}
    </Tree>
    <Tree $h={56}>
      <TreeRoot><Funnel />Queries</TreeRoot>
      <TreeRow $bold><Center><Chevron dir="r" color="#aaa" w={2} /></Center><Center><Funnel s={9} /></Center>Degree Range</TreeRow>
      <TreeRow><Center><Chevron dir="r" color="#aaa" w={2} /></Center><Center><Funnel s={9} /></Center>Giant Component</TreeRow>
    </Tree>
    <Settings>
      <Legend>Degree Range Settings</Legend>
      <svg width="208" height="22" viewBox="0 0 208 22">
        <path d="M10 11.500h191" stroke="#000" /><path d="M10 12.500h192M201.500 10v3" stroke="#fff" />
        <rect x="0" y="2" width="10" height="18" fill="#f1f1f1" /><path d="M0 20.500h10.500V2" fill="none" stroke="#000" /><path d="M.5 20V2.500H9" fill="none" stroke="#fff" />
      </svg>
      <RangeLabels><span>1</span><span>1</span></RangeLabels>
      <svg width="208" height="24" viewBox="0 0 208 24"><path d="M180 22.500h27.500V2" fill="none" stroke="#ccc" /><path d="M201 22h6v-6z" fill="#ccc" /></svg>
    </Settings>
    <FilterActions>
      <Button $w={74} $gap={4}>
        <svg width="14" height="14" viewBox="0 0 14 14"><rect width="14" height="14" fill="#e3edf7" /><path d="M0 4 4 0M0 7 7 0M0 10 10 0M0 13 13 0M2 14 14 2M5 14l9-9M8 14l6-6M11 14l3-3" stroke="#91b2d6" strokeWidth=".9" /></svg>Select
      </Button>
      <Button $w={67} $gap={5}>
        <svg width="11" height="11"><rect x=".5" y=".5" width="10" height="10" fill="#dd5541" stroke="#a62012" /><path d="M2 2h6L2 8z" fill="#f09a8a" /></svg>Stop
      </Button>
    </FilterActions>
  </Panel>
);

const TaskbarView = () => (
  <Taskbar>
    <Start><svg width="16" height="16" viewBox="0 0 16 16"><path d="M0 2.300 7 1.300V7.500H0zM8 1.200 16 0v7.500H8zM0 8.500h7v6.200L0 13.700zM8 8.500h8V16l-8-1.200z" fill="#000" /></svg></Start>
    <Search>
      <svg width="17" height="17" viewBox="0 0 17 17" fill="none" stroke="#222" strokeWidth="1.300"><circle cx="10.500" cy="6" r="5" /><path d="m7 9.500-6 6.500" /></svg>
      <SearchText>Search</SearchText>
      <svg width="54" height="26" viewBox="0 0 54 26">
        <path d="M8 11 14 6l4 2 4-4 3 2 4-6 4 5 4-2 5 4 6 5z" fill="#54769b" /><path d="m22 9 3-6 3 7zM34 9l3-4 3 5z" fill="#7fb0a0" />
        <path d="M1 15c1 5 5 5 8 8l4-1 5 3 6-1 7 2 6-3 5 1 4-4c4-1 6-2 7-5z" fill="#8f4f28" />
        <ellipse cx="27" cy="15" rx="26" ry="7.500" fill="#dd8747" />
        <ellipse cx="27" cy="14.500" rx="21" ry="5.500" fill="#9fe08a" /><ellipse cx="27" cy="14.500" rx="18" ry="4.700" fill="#3fe0d8" /><ellipse cx="27" cy="14.500" rx="13" ry="3.500" fill="#14a8f5" /><ellipse cx="27" cy="14.500" rx="6" ry="1.800" fill="#1250d8" />
      </svg>
    </Search>
    <TaskItem $w={36}><svg width="16" height="17" viewBox="0 0 16 17" fill="none" stroke="#111" strokeWidth="1.300"><path d="M1 3V1M1 14v2M10.500 1v2M1 3h9.500M1 14h9.500M1 5.500h9.500v6H1zM10.500 14v2M14 1v3M14 7v9" /><path d="M12.500 5.500h3" strokeWidth="2" /></svg></TaskItem>
    <TaskItem $w={43}><svg width="17" height="16" viewBox="0 0 17 16"><path d="M6 1h5l2 4-3 1-3 8H4L1 10 4 3z" fill="#1c8fe0" /><path d="M4 3l2-2-1.500 7L3 12 1 10z" fill="#3a6ae0" /><path d="m2 11 3-5 3 1-1.500 6H4z" fill="#5cc878" /><path d="M11 1l2 4-3 1-1.500-3z" fill="#2a4fc0" /><path d="M13 4h2l1.500 3L14 14l-2 1.500H7L9 10l2-5z" fill="#c05ad8" /><path d="m7 15 2-6 5 1-2 5z" fill="#f06a6a" /><path d="m7 15 1-3 3 1-.5 2.500z" fill="#f5a04a" /></svg></TaskItem>
    <TaskItem $w={30} $line={28}>
      <svg width="17" height="17" viewBox="0 0 17 17"><circle cx="8.500" cy="8.500" r="8" fill="#e24435" /><path d="M8.500 8.500 1.500 4.500a8 8 0 0 0 6 12z" fill="#2fa24f" /><path d="M8.500 8.500h7.500a8 8 0 0 1-8 8z" fill="#fbc116" /><path d="M8.500 5h7a8 8 0 0 1 .8 5H11z" fill="#fbc116" /><circle cx="8.500" cy="8.500" r="4" fill="#fff" /><circle cx="8.500" cy="8.500" r="3" fill="#3f80ee" /></svg>
    </TaskItem>
    <TaskItem $w={44} $line={28}>
      <svg width="17" height="17" viewBox="0 0 17 17"><circle cx="8.500" cy="8.500" r="8" fill="#1672c4" /><path d="M1 7c1-8 15-9 15.500 1 0 4-5 4-6 2 1-4-4-6-9.500-3z" fill="#35c1b8" /><path d="M6 8c-1 5 4 7 9 5-3 5-10 4-11-1 0-2 1-3 2-4z" fill="#0c4f9e" /><path d="M8 8c0 3 3 4 6 3" stroke="#eee" strokeWidth="1.500" fill="none" /></svg>
    </TaskItem>
    <TaskItem $w={30} $line={28}><svg width="17" height="16" viewBox="0 0 17 16"><path d="M0 1h7l2 2h7.500v12H0z" fill="#f5b82e" /><path d="M0 5h16.500v10H0z" fill="#fbd567" /><path d="M4 15V9h9v6h-2.500v-3h-4v3z" fill="#3d90d9" /></svg></TaskItem>
    <TaskItem $w={44} $line={28}><svg width="16" height="17" viewBox="0 0 16 17"><path d="M5 4V1.500h6V4" fill="none" stroke="#3cb3e8" strokeWidth="1.500" /><rect x=".5" y="3.500" width="15" height="13" rx="2" fill="#145a9c" /><path d="M4.500 6.500h3v3h-3z" fill="#f25022" /><path d="M8.500 6.500h3v3h-3z" fill="#7fba00" /><path d="M4.500 10.500h3v3h-3z" fill="#00a4ef" /><path d="M8.500 10.500h3v3h-3z" fill="#ffb900" /></svg></TaskItem>
    <TaskItem $w={31} $line={28}><svg width="17" height="16" viewBox="0 0 17 16"><rect x="7" y="1.500" width="9" height="13" fill="#fff" stroke="#2b579a" /><path d="M9 4.500h5.500M9 7h5.500M9 9.500h5.500M9 12h5.500" stroke="#2b579a" /><path d="m0 2 9-2v16l-9-2z" fill="#2b579a" /><path d="m2 5 1 6 1.500-5L6 11l1-6" fill="none" stroke="#fff" /></svg></TaskItem>
    <TaskItem $w={43} $line={28}><svg width="16" height="13" viewBox="0 0 16 13"><rect width="16" height="13" fill="#999" /><rect x="1" y="2" width="14" height="10" fill="#000" /><path d="M5 5H3v3h2M7 5v1M7 7v1M8.500 5l1.500 3M11 8.500h3" stroke="#fff" fill="none" /></svg></TaskItem>
    <TaskItem $w={32} $line={32} $bg="#f6f3f0"><GephiMark bg="#000" /></TaskItem>
    <TaskItem $w={42} $line={28}><svg width="17" height="17" viewBox="0 0 17 17"><rect x="1" y="2" width="12" height="14" fill="#fff" stroke="#666" /><path d="M2 1v2M4.500 1v2M7 1v2M9.500 1v2" stroke="#333" /><path d="M2 7h10v8H2z" fill="#8fce1e" /><path d="m15 1-6 11-1 3 3-2 5-11z" fill="#f3c53c" stroke="#8a5c1e" strokeWidth=".7" /></svg></TaskItem>
    <TaskItem $w={33} $line={28}><svg width="17" height="16" viewBox="0 0 17 16"><rect x="7" y="1.500" width="9" height="13" fill="#fff" stroke="#1f7145" /><path d="M9 4.500h5.500M9 7h5.500M9 9.500h5.500M9 12h5.500M12 3v10" stroke="#1f7145" /><path d="m0 2 9-2v16l-9-2z" fill="#1f7145" /><path d="m2.500 5 4 6M6.500 5l-4 6" stroke="#fff" strokeWidth="1.200" /></svg></TaskItem>
    <TaskItem $w={36} $line={36} $bg="#e9e6e2"><svg width="17" height="17" viewBox="0 0 17 17"><path d="M12 .5 16.500 2.500v12L12 16.500 5.500 10.500 2 13 .5 12V5L2 4l3.500 2.500zM12 5 8 8.500l4 3.500zM2 6.500v4l2-2z" fill="#1583d1" fillRule="evenodd" /></svg></TaskItem>
    <Tray>
      <svg width="24" height="24" viewBox="0 0 24 24"><circle cx="12" cy="13" r="9.500" fill="#f7a31b" /><path d="M5 16h16.500c-1 4-5 6.500-9.500 6.500S6 20 5 16z" fill="#f5821f" /><path d="M0 8.500h15M2 12.500h21M0 16.500h17" stroke="#fbd33a" strokeWidth="1.500" /><circle cx="17.500" cy="7" r="6" fill="#c52c22" /><path d="M16.500 5l1.300-1v6" stroke="#fff" fill="none" /></svg>
      <Slot $w={7} />
      <TrayText $w={38} $size={14} $ls={-0.4}>33°C</TrayText>
      <TrayText $w={50} $size={14} $ls={-0.5}>Haze</TrayText>
      <Chevron dir="u" color="#222" size={12} w={1.1} />
      <Slot $w={5} />
      <Slot $w={24}><svg width="12" height="16" viewBox="0 0 12 16" fill="none" stroke="#111" strokeWidth="1.200"><rect x="1" y="4.500" width="7.500" height="7" rx="1.500" /><path d="m8.500 7.500 2.500-1.500v4.500L8.500 9M2.500 2c2-1.300 4-1.300 6 0M2.500 14c2 1.300 4 1.300 6 0" /></svg></Slot>
      <Slot $w={25}><svg width="16" height="13" viewBox="0 0 16 13" fill="none" stroke="#111" strokeWidth="1.200"><path d="M7 3.500h7v7H5V8M14.500 5.500v3M1.500 0v2.500M4.500 0v2.500M.5 3h5v2l-1.500 1.500h-2L.5 5zM3 7v4" /><rect x="8" y="5" width="4.500" height="4" fill="#555" stroke="none" /></svg></Slot>
      <Slot $w={24}><svg width="16" height="17" viewBox="0 0 16 17" fill="none" stroke="#111" strokeWidth="1.200"><path d="m1 3 14-2v12L1 15zM5 7c1-2 4-2.500 5-1V4M10.500 9c-1 2-4 2.500-5 1v2" /><circle cx="12.500" cy="13" r="3.500" fill="#ff9a00" stroke="none" /></svg></Slot>
      <Slot $w={25}><svg width="14" height="14" viewBox="0 0 14 14" fill="none" stroke="#333" strokeWidth="1.200"><path d="M1 12C1 6 6 1.500 12.500 1.500M4 12.500c0-4.500 4-8 8.500-8M7 12.500c0-3 2.500-5 5.500-5M10 12.500c0-1.300 1-2 2.500-2" /></svg></Slot>
      <Slot $w={23}><svg width="17" height="14" viewBox="0 0 17 14" fill="none" stroke="#111" strokeWidth="1.200"><path d="M1 5h2.500L7 1.500v11L3.500 9H1zM9.500 4.500c1.500 1.500 1.500 3.500 0 5M11.800 2.500c3 2.500 3 6.500 0 9M14 1c3.500 3.500 3.500 8.500 0 12" /></svg></Slot>
      <Slot $w={6} />
      <TrayText $w={36}>ENG</TrayText>
      <TrayText $w={67} $ls={-0.45}>05:09 PM</TrayText>
      <svg width="17" height="17" viewBox="0 0 17 17"><path d="M0 1h17v12h-5.500L8.500 16l-3-3H0z" fill="#000" /><path d="M3 4.500h11M3 7h11M3 9.500h7" stroke="#ddd" /></svg>
      <Slot $w={19} />
    </Tray>
  </Taskbar>
);

export default function App() {
  return (
    <Screen>
      <Global />
      <TitleBar>
        <MenuBar>
          <MenuItem $w={32}><GephiMark bg="#0b0b0b" /></MenuItem>
          <MenuItem $w={34}>File</MenuItem>
          <MenuItem $w={74}>Workspace</MenuItem>
          <MenuItem $w={41}>View</MenuItem>
          <MenuItem $w={44}>Tools</MenuItem>
          <MenuItem $w={60}>Window</MenuItem>
          <MenuItem $w={40}>Help</MenuItem>
        </MenuBar>
        <Title>Gephi 0.10.1 - Untitled</Title>
        <WindowButtons>
          <svg width="11" height="11"><path d="M0 5.500h10" stroke="#000" /></svg>
          <svg width="11" height="11" fill="none" stroke="#000"><path d="M.5 2.500h8v8h-8zM2.500 2.500v-2h8v8h-2" /></svg>
          <svg width="11" height="11" stroke="#000" strokeWidth="1.200"><path d="M.5.5l10 10M10.500.5l-10 10" /></svg>
        </WindowButtons>
      </TitleBar>
      <PerspectiveBar>
        <ButtonRow>
          <Button $w={99} $on><Globe />Overview</Button>
          <Button $w={134}><TableIcon />Data Laboratory</Button>
          <Button $w={91}><Monitor />Preview</Button>
        </ButtonRow>
        <WorkspaceTab>bio-CE-LC<Close /></WorkspaceTab>
        <WorkspaceTab $active>bio-CE-LC<Close /></WorkspaceTab>
        <TabArrows><Chevron dir="l" color="#999" /><Chevron dir="r" color="#999" /><Chevron dir="d" color="#555" /></TabArrows>
      </PerspectiveBar>
      <Workbench>
        <Column><Appearance /><LayoutPanel /></Column>
        <GraphPanel />
        <Column><ContextPanel /><FiltersPanel /></Column>
      </Workbench>
      <TaskbarView />
    </Screen>
  );
}
